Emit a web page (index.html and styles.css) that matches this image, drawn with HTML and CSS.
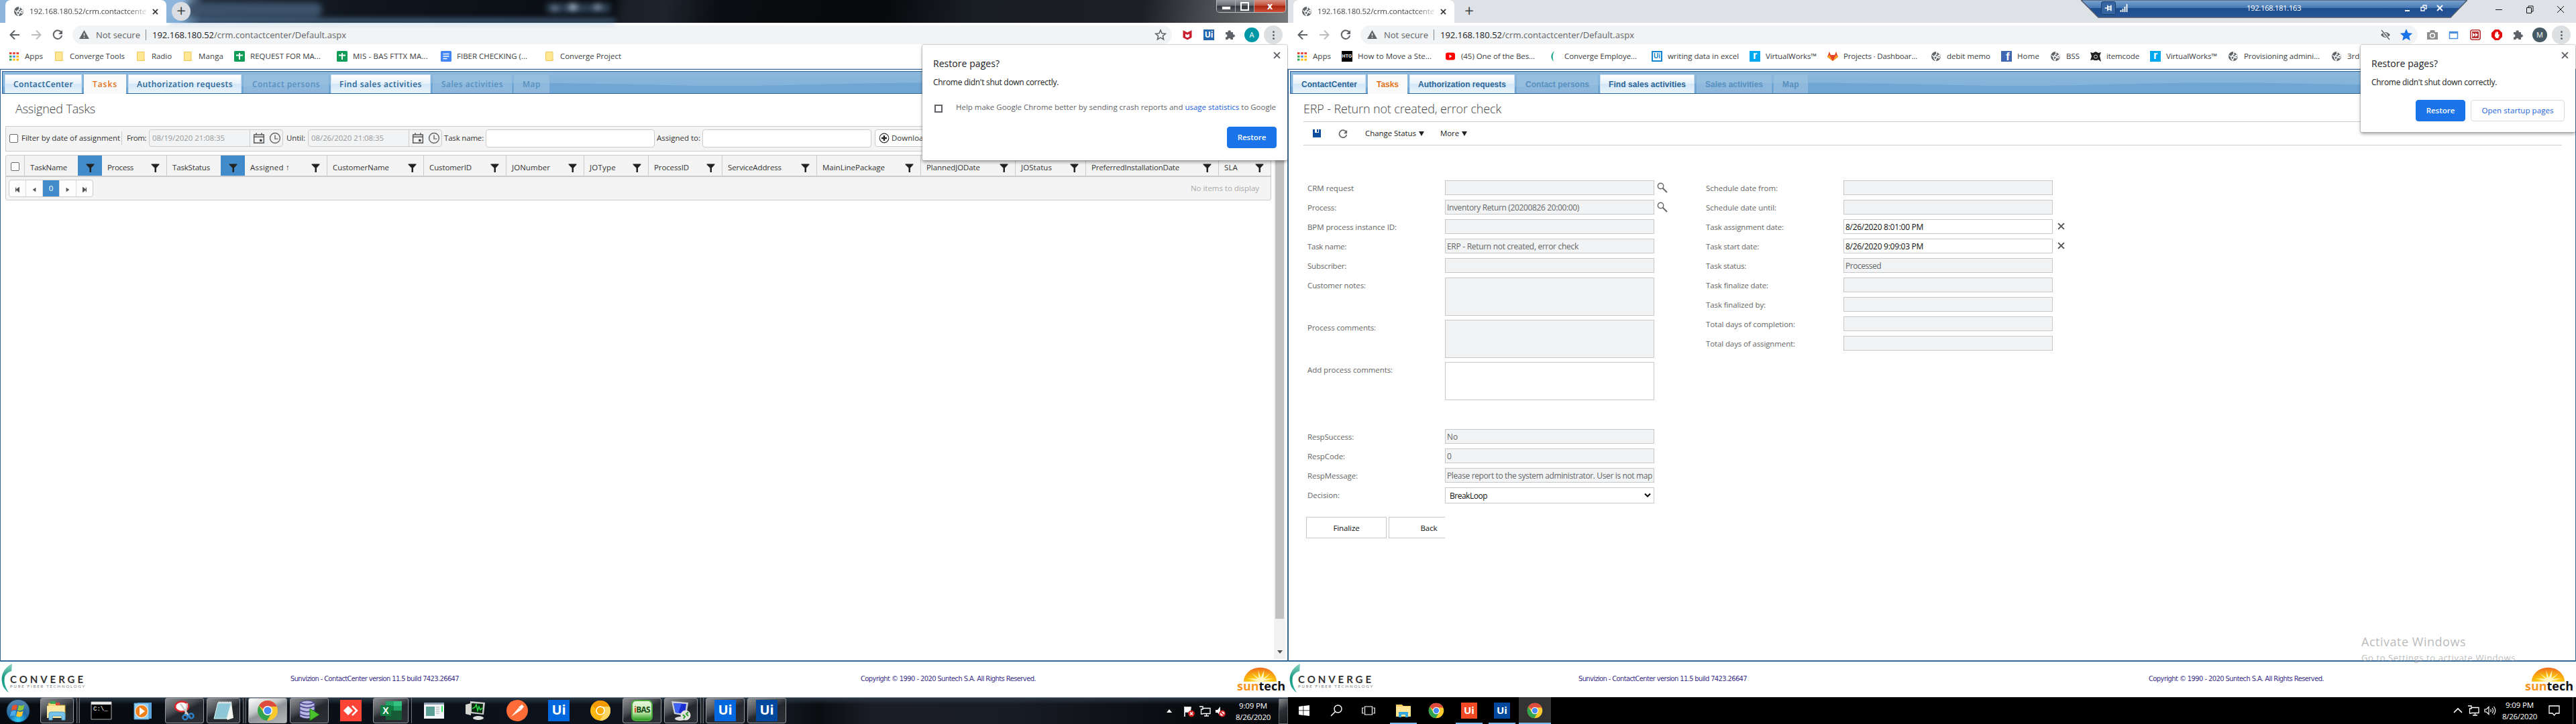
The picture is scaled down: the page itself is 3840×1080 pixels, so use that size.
FILE: index.html
```html
<!DOCTYPE html>
<html lang="en">
<head>
<meta charset="utf-8">
<title>ContactCenter</title>
<link rel="stylesheet" href="styles.css">
</head>
<body>
<svg class="defs" width="0" height="0">
  <linearGradient id="leaf" x1="0" y1="0" x2="0" y2="1"><stop offset="0" stop-color="#8ed6c4"/><stop offset=".5" stop-color="#17977f"/><stop offset="1" stop-color="#35b39c"/></linearGradient>
  <radialGradient id="sun" cx=".5" cy="1" r="1"><stop offset="0" stop-color="#fff3a0"/><stop offset=".35" stop-color="#fdc70c"/><stop offset="1" stop-color="#f06a1e"/></radialGradient>
  <symbol id="globe" viewBox="0 0 16 16"><circle cx="8" cy="8" r="7" fill="#5f6368"/><path d="M2.2 6.5 5 9l.3 2.4L7.4 14l1-2.600L9.800 9.500 8 8H5.500L7 6l2-.8L8.600 2H11c2.400 1.500 3 3.500 3 6l-2-1.500-1.500 1.500 1 2.500L14 10" fill="none" stroke="#fff" stroke-width="1.400"/></symbol>
  <symbol id="back" viewBox="0 0 16 16"><path d="M15 8H2M8 1.500 1.500 8 8 14.500" fill="none" stroke="currentColor" stroke-width="2"/></symbol>
  <symbol id="reload" viewBox="0 0 16 16"><path d="M13.500 4.500A6.300 6.300 0 1 0 14.200 9" fill="none" stroke="currentColor" stroke-width="2"/><path d="M15 1v6H9z" fill="currentColor"/></symbol>
  <symbol id="warn" viewBox="0 0 16 14"><path d="M8 0 16 14H0z" fill="#5f6368"/><path d="M8 5v4M8 10.500v1.700" stroke="#fff" stroke-width="1.600"/></symbol>
  <symbol id="close" viewBox="0 0 10 10"><path d="m1 1 8 8M9 1 1 9" stroke="currentColor" stroke-width="1.800"/></symbol>
  <symbol id="apps" viewBox="0 0 16 16"><path d="M1 2h3.500v3H1z M6.200 2h3.500v3H6.200z M11.500 2H15v3h-3.500z" fill="#ea4335"/><path d="M1 6.800h3.500v3H1z" fill="#34a853"/><path d="M6.200 6.800h3.500v3H6.200z" fill="#4285f4"/><path d="M11.500 6.800H15v3h-3.500z M6.200 11.500h3.500v3H6.200z M11.500 11.500H15v3h-3.500z" fill="#fbbc05"/><path d="M1 11.500h3.500v3H1z" fill="#34a853"/></symbol>
  <symbol id="folder" viewBox="0 0 16 16"><path d="M2.500 1.500h10.500v13H2.500z" fill="#ffe794" stroke="#efc75e"/><path d="M11 12h3v2.500h-3z" fill="#f7d775"/></symbol>
  <symbol id="sheet" viewBox="0 0 16 16"><rect width="16" height="16" rx="1.500" fill="#0f9d58"/><path d="M3 6.500h10M8 3v10" stroke="#fff" stroke-width="2"/></symbol>
  <symbol id="doc" viewBox="0 0 16 16"><rect width="16" height="16" rx="1.500" fill="#4285f4"/><path d="M3.500 4.500h9M3.500 8h9M3.500 11.500h6" stroke="#fff" stroke-width="1.600"/></symbol>
  <symbol id="star" viewBox="0 0 16 16"><path d="m8 1.800 1.900 4.300 4.600.4-3.500 3 1.100 4.600L8 11.700l-4.100 2.400L5 9.500l-3.500-3 4.600-.4z" fill="var(--f,none)" stroke="currentColor" stroke-width="1.400"/></symbol>
  <symbol id="puzzle" viewBox="0 0 16 16"><path d="M1 4h3.500a2.200 2.200 0 1 1 4.300 0H12v3.400a2.200 2.200 0 1 1 0 4.200V15H8.500a2 2 0 1 0-4 0H1v-3.700a2 2 0 1 0 0-3.900z" fill="#5f6368"/></symbol>
  <symbol id="funnel" viewBox="0 0 13 13"><path d="M.5.500h12v1L8 6.500V13H5.500V6.500L.5 1.500z" fill="#222"/></symbol>
  <symbol id="cal" viewBox="0 0 16 16"><path d="M1.500 3.500h13v11h-13zM1.500 6.500h13M4.500 1v3M11.500 1v3" fill="none" stroke="#555" stroke-width="1.300"/><path d="M9 9.500h3v3H9z" fill="#444"/></symbol>
  <symbol id="clock" viewBox="0 0 16 16"><circle cx="8" cy="8" r="6.600" fill="none" stroke="#666" stroke-width="1.300"/><path d="M8 4v5h4" fill="none" stroke="#666" stroke-width="1.300"/></symbol>
  <symbol id="mag" viewBox="0 0 16 16"><circle cx="5.500" cy="5.500" r="4.200" fill="none" stroke="#666" stroke-width="1.400"/><path d="m8.500 8.500 6.500 6.500" stroke="#666" stroke-width="2"/></symbol>
  <symbol id="chrome" viewBox="0 0 32 32"><circle cx="16" cy="16" r="15" fill="#fbc92e"/><path d="M3 8.500A15 15 0 0 1 29 8.500L29.500 10H16a6.500 6.500 0 0 0-6 4z" fill="#dd4b3e"/><path d="M3 8.500A15 15 0 0 0 15 31l6.500-11a6.600 6.600 0 0 1-11.500-1z" fill="#31a350"/><circle cx="16" cy="16" r="7" fill="#fff"/><circle cx="16" cy="16" r="5.500" fill="#4a8af4"/></symbol>
  <symbol id="converge" viewBox="0 0 18 48"><path d="M17 1C5 8-1 18 1 30c1 8 5 13 11 17C7 40 4 33 5 24c.6-5 5-9 11-11z" fill="url(#leaf)"/></symbol>
  <symbol id="suntech" viewBox="0 0 52 22"><path d="M1 22a25 21.500 0 0 1 50 0z" fill="url(#sun)"/><path d="m26 22-19-5 15 1-9-9 11 8-1-12 4 11 5-11-1 12 11-8-9 9 14-1z" fill="#fff6c4"/></symbol>
  <symbol id="net" viewBox="0 0 18 16"><path d="M6 3.500h11v8H6M11.500 11.500V15M8 15h7M1 1h5v4H3.500v7H6" fill="none" stroke="#fff" stroke-width="1.300"/></symbol>
</svg>

<div class="desktop">

<!-- First monitor -->
<section class="screen win7">
  <header class="strip">
    <div class="ghosts"><i class="g1"></i><i class="g2"></i><i class="g3"></i><i class="g4"></i></div>
    <div class="btab"><svg class="i16"><use href="#globe"/></svg><span class="fit fade" data-w="174">192.168.180.52/crm.contactcente</span><svg class="i9"><use href="#close"/></svg></div>
    <div class="plus">+</div>
    <div class="caption7"><b class="min"></b><b class="max"></b><b class="cls">x</b></div>
  </header>
  <div class="toolbar">
    <svg class="nav"><use href="#back"/></svg><svg class="nav fwd"><use href="#back"/></svg><svg class="nav"><use href="#reload"/></svg>
    <div class="omni"><svg class="warn"><use href="#warn"/></svg><span class="fit ns" data-w="66">Not secure</span><i class="bar"></i><span class="fit host" data-w="92">192.168.180.52</span><span class="fit path" data-w="197">/crm.contactcenter/Default.aspx</span><svg class="i18 end"><use href="#star"/></svg></div>
    <div class="exts">
      <svg class="i16" viewBox="0 0 16 16"><path d="m1.500 1 6.500 3.500L14.500 1v11L8 15.500 1.500 12z" fill="#c8202f"/><path d="M5 6.500 8 8l3-1.500v4.300L8 12.300l-3-1.500z" fill="#fff"/></svg>
      <span class="uibox">Ui</span>
      <svg class="i16"><use href="#puzzle"/></svg>
      <span class="avatar teal">A</span>
      <span class="dots"><i></i><i></i><i></i></span>
    </div>
  </div>
  <nav class="bookmarks">
    <a><svg><use href="#apps"/></svg><span class="fit" data-w="27">Apps</span></a>
    <a><svg><use href="#folder"/></svg><span class="fit" data-w="82">Converge Tools</span></a>
    <a><svg><use href="#folder"/></svg><span class="fit" data-w="30">Radio</span></a>
    <a><svg><use href="#folder"/></svg><span class="fit" data-w="37">Manga</span></a>
    <a><svg><use href="#sheet"/></svg><span class="fit" data-w="105" data-b="113">REQUEST FOR MA...</span></a>
    <a><svg><use href="#sheet"/></svg><span class="fit" data-w="112" data-b="115">MIS - BAS FTTX MA...</span></a>
    <a><svg><use href="#doc"/></svg><span class="fit" data-w="105" data-b="114">FIBER CHECKING (...</span></a>
    <a><svg><use href="#folder"/></svg><span class="fit" data-w="91">Converge Project</span></a>
  </nav>
  <main class="frame">
    <div class="tabs">
      <svg class="wave" viewBox="0 0 1920 32" preserveAspectRatio="none"><path d="M0 22C300 28 500 15 830 17c160 2 200 5 290 4 130-2 200-6 350-4 150 2 300 8 450 0V32H0z"/></svg>
      <a><span class="fit" data-w="89">ContactCenter</span></a><a class="on"><span class="fit" data-w="37">Tasks</span></a><a><span class="fit" data-w="143">Authorization requests</span></a><a class="off"><span class="fit" data-w="101">Contact persons</span></a><a><span class="fit" data-w="123">Find sales activities</span></a><a class="off"><span class="fit" data-w="92">Sales activities</span></a><a class="off"><span class="fit" data-w="27">Map</span></a>
    </div>
    <div class="content">
      <div class="listing">
        <h1><span class="fit" data-w="119">Assigned Tasks</span></h1>
        <div class="filters">
          <i class="cb"></i><span class="fit flabel" data-w="147">Filter by date of assignment</span><i class="vr"></i>
          <span class="fit" data-w="29">From:</span>
          <div class="dt"><span class="fit" data-w="109" data-b="146">08/19/2020 21:08:35</span><svg class="i18"><use href="#cal"/></svg><svg class="i18"><use href="#clock"/></svg></div>
          <span class="fit" data-w="28">Until:</span>
          <div class="dt"><span class="fit" data-w="109" data-b="146">08/26/2020 21:08:35</span><svg class="i18"><use href="#cal"/></svg><svg class="i18"><use href="#clock"/></svg></div>
          <span class="fit tn" data-w="59">Task name:</span><div class="txt"></div>
          <span class="fit tn" data-w="65">Assigned to:</span><div class="txt"></div>
          <div class="dl"><svg class="i16" viewBox="0 0 16 16"><circle cx="8" cy="8" r="6.800" fill="none" stroke="#333" stroke-width="1.200"/><path d="M4 8h8M8 4v8" stroke="#222" stroke-width="2.400"/></svg><span>Download</span></div>
        </div>
        <div class="gridbox">
          <div class="ghead">
            <div class="ck"><i class="cb"></i></div>
            <div><span class="fit" data-w="55">TaskName</span><b class="sel"><svg><use href="#funnel"/></svg></b></div>
            <div><span class="fit" data-w="39">Process</span><b><svg><use href="#funnel"/></svg></b></div>
            <div><span class="fit" data-w="56">TaskStatus</span><b class="sel"><svg><use href="#funnel"/></svg></b></div>
            <div><span class="fit" data-w="59">Assigned ↑</span><b><svg><use href="#funnel"/></svg></b></div>
            <div><span class="fit" data-w="84">CustomerName</span><b><svg><use href="#funnel"/></svg></b></div>
            <div><span class="fit" data-w="63">CustomerID</span><b><svg><use href="#funnel"/></svg></b></div>
            <div><span class="fit" data-w="57">JONumber</span><b><svg><use href="#funnel"/></svg></b></div>
            <div><span class="fit" data-w="39">JOType</span><b><svg><use href="#funnel"/></svg></b></div>
            <div><span class="fit" data-w="52">ProcessID</span><b><svg><use href="#funnel"/></svg></b></div>
            <div><span class="fit" data-w="80">ServiceAddress</span><b><svg><use href="#funnel"/></svg></b></div>
            <div><span class="fit" data-w="93">MainLinePackage</span><b><svg><use href="#funnel"/></svg></b></div>
            <div><span class="fit" data-w="80">PlannedJODate</span><b><svg><use href="#funnel"/></svg></b></div>
            <div><span class="fit" data-w="46">JOStatus</span><b><svg><use href="#funnel"/></svg></b></div>
            <div><span class="fit" data-w="131">PreferredInstallationDate</span><b><svg><use href="#funnel"/></svg></b></div>
            <div><span class="fit" data-w="20">SLA</span><b><svg><use href="#funnel"/></svg></b></div>
          </div>
          <div class="pager">
            <div class="pages">
              <i><svg viewBox="0 0 10 10"><path d="M2 1v8M8 1v8L3 5z" fill="#555" stroke="#555" stroke-width="1.500"/></svg></i><i><svg viewBox="0 0 10 10"><path d="M8 1v8L2 5z" fill="#555"/></svg></i><i class="cur">0</i><i><svg viewBox="0 0 10 10"><path d="M2 1v8l6-4z" fill="#555"/></svg></i><i><svg viewBox="0 0 10 10"><path d="M8 1v8M2 1v8l5-4z" fill="#555" stroke="#555" stroke-width="1.500"/></svg></i>
            </div>
            <span class="fit" data-w="102">No items to display</span>
          </div>
        </div>
      </div>
      <div class="scroll"><i class="thumb"></i><i class="down"></i></div>
    </div>
  </main>
  <footer class="foot">
    <div class="conv"><svg class="cleaf"><use href="#converge"/></svg><div><b class="fit" data-w="113">CONVERGE</b><small class="fit" data-w="113">PURE FIBER TECHNOLOGY</small></div></div>
    <p class="ver"><span class="fit" data-w="251">Sunvizion - ContactCenter version 11.5 build 7423.26647</span></p>
    <p class="copy"><span class="fit" data-w="261">Copyright © 1990 - 2020 Suntech S.A. All Rights Reserved.</span></p>
    <div class="sunt"><svg><use href="#suntech"/></svg><b class="fit" data-w="72"><em>sun</em>tech</b></div>
  </footer>
  <div class="task7">
    <svg class="orb" viewBox="0 0 40 40"><defs><radialGradient id="ob" cx=".5" cy=".9" r=".9"><stop offset="0" stop-color="#2fd0f5"/><stop offset=".45" stop-color="#1d6aa8"/><stop offset="1" stop-color="#5c86a8"/></radialGradient></defs><circle cx="20" cy="20" r="18" fill="url(#ob)" stroke="#12324d"/><path d="M11 12q4-3 8-1l-2 8q-4-2-8 1z" fill="#e5532d"/><path d="M21 11q5 2 9-1l-2 8q-5 3-9 1z" fill="#8cc63f"/><path d="M9 21q4-3 8-1l-2 8q-4-2-8 1z" fill="#4fa9e8"/><path d="M19 20q4 3 9 0l-2 8q-5 3-9 0z" fill="#fbc52d"/></svg>
    <div class="slot on stack"><svg viewBox="0 0 32 32"><path d="M3 5h10l2 3h13v17H3z" fill="#f4d879" stroke="#c9a544"/><path d="M6 2h8v4H6z" fill="#3aa655"/><path d="M14 4h6v4h-6z" fill="#d9483b"/><path d="M1 9h26v18H1z" fill="#fbe9a2"/><path d="M4 30V21q0-3 3-3h17q4 0 4 3v9h-5v-6H9v6z" fill="#79c3ea" stroke="#4d9cc9"/></svg></div>
    <div class="slot"><svg viewBox="0 0 32 32"><path d="M1 3h30v26H1z" fill="#000" stroke="#aaa"/><path d="M1 3h30v4H1z" fill="#e6e6e6"/><text x="4" y="16" class="cmd">C:\_</text></svg></div>
    <div class="slot"><svg viewBox="0 0 32 32"><path d="M8 4h21v24H8z" fill="#5aa5dc"/><path d="M3 5h22v24H3z" fill="#8fcdf2" stroke="#4c93c4"/><circle cx="14" cy="17" r="9.500" fill="#f0821e" stroke="#fff"/><path d="M11 11v12l8-6z" fill="#fff"/></svg></div>
    <div class="slot on"><svg viewBox="0 0 32 32"><ellipse cx="12" cy="10" rx="10" ry="7.500" fill="#fff" stroke="#d8262c" stroke-width="2.500"/><path d="m10 6 14 20M20 5l-3 19" stroke="#ccc" stroke-width="2.500"/><circle cx="17" cy="26" r="3.500" fill="none" stroke="#2b80c9" stroke-width="2.500"/><circle cx="26" cy="24" r="3.500" fill="none" stroke="#2b80c9" stroke-width="2.500"/></svg></div>
    <div class="slot on stack"><svg viewBox="0 0 32 32"><path d="M8 4h20l-7 24H2z" fill="#8fc7d6" stroke="#dff"/><path d="m28 4 3 23-9 3-1-2z" fill="#f4f4ee"/><path d="M9 4h19" stroke="#eee" stroke-width="3" stroke-dasharray="1.500 1"/></svg></div>
    <div class="slot on lit"><svg><use href="#chrome"/></svg></div>
    <div class="slot on"><svg viewBox="0 0 32 32"><path d="M2 4q11-6 22 0v21q-11 6-22 0z" fill="#b8b8e2" stroke="#44448a"/><path d="M2 9q11 6 22 0M2 15q11 6 22 0M2 21q11 6 22 0M2 4q11 5 22 0" fill="none" stroke="#44448a" stroke-width="1.500"/><path d="M17 13v18l14-9z" fill="#4cc22e" stroke="#1f7a12"/></svg></div>
    <div class="slot"><svg viewBox="0 0 32 32"><path d="M0 0h32v32H0z" fill="#fb4336"/><path d="m12 9 7 7-7 7-7-7z" fill="#fff"/><path d="m18 9 7 7-7 7" fill="none" stroke="#fff" stroke-width="2.500"/></svg></div>
    <div class="slot on stack one"><svg viewBox="0 0 32 32"><path d="M8 2h12v7H8z" fill="#21a366"/><path d="M20 2h12v7H20z" fill="#33c481"/><path d="M8 9h12v14H8z" fill="#107c41"/><path d="M20 9h12v7H20z" fill="#21a366"/><path d="M8 16h24v14H8z" fill="#185c37"/><path d="M0 8h16v16H0z" fill="#107c41"/><text x="8" y="21" class="xl">X</text></svg></div>
    <div class="slot"><svg viewBox="0 0 32 32"><path d="M1 4h30v24H1z" fill="#f2f4f7"/><path d="M1 4h30v3H1z" fill="#8d9db0"/><path d="M4 10h13v14H4z" fill="#5b9e96"/><path d="M19 11h5M19 14h5M19 17h5M19 20h5" stroke="#aaa"/><path d="M27 9h2v9h-2z" fill="#3e6"/></svg></div>
    <div class="slot"><svg viewBox="0 0 32 32"><path d="M1 7 9 5v18l-8-2z" fill="#d6d6d0"/><path d="m8 2 22 2-2 18-20-2z" fill="#ccc"/><path d="m10 5 17 1-1 14-16-2z" fill="#06280b"/><path d="m11 13 4-2 2-4 2 9 2-6 2 5 3-3" fill="none" stroke="#2ee04a" stroke-width="1.500"/><ellipse cx="20" cy="27" rx="8" ry="3" fill="#ddd"/></svg></div>
    <div class="slot"><svg viewBox="0 0 32 32"><circle cx="16" cy="16" r="16" fill="#ff6c37"/><path d="m7 25 11-13 4 3zM18 11l5-4 3 3-4 5" fill="#fff"/></svg></div>
    <div class="slot"><span class="ui b1">Ui</span></div>
    <div class="slot"><svg viewBox="0 0 32 32"><circle cx="16" cy="16" r="15" fill="#fbb80f"/><path d="M3 8.500A15 15 0 0 1 29 8.500V10H16a6 6 0 0 0-6 4z" fill="#f29900"/><path d="m22 19-7 12a15 15 0 0 0 16-15q0-3-1-6H18z" fill="#fdd663"/><circle cx="16" cy="16" r="6" fill="#f9ab00" stroke="#fff" stroke-width="1.600"/></svg></div>
    <div class="slot on"><span class="ibas"><em>i</em>BAS</span></div>
    <div class="slot on stack"><svg viewBox="0 0 32 32"><path d="m2 2 25 2-3 20-18-3z" fill="#c9ced6"/><path d="m5 5 19 1-2 15-14-2z" fill="#1a2ed0"/><path d="m5 5 12 .6L12 20l-4-1z" fill="#3e62f4"/><ellipse cx="15" cy="28" rx="8" ry="3" fill="#ddd"/><circle cx="23" cy="23" r="7.500" fill="#e3e3de"/><path d="m19 22 3 3-2 3M27 18l-3 3 3 3" fill="none" stroke="#2ba02b" stroke-width="2"/></svg></div>
    <div class="slot on"><span class="ui b1">Ui</span></div>
    <div class="slot on"><span class="ui b2">Ui</span></div>
    <div class="tray">
      <svg class="up" viewBox="0 0 8 5"><path d="M0 5h8L4 0z" fill="#fff"/></svg>
      <svg class="i18" viewBox="0 0 18 18"><path d="M2 2v15M3 3h8l-1 7H3z" stroke="#fff" stroke-width="1.600" fill="#fff"/><circle cx="12" cy="12.500" r="4.800" fill="#d32020"/><path d="m10 10.500 4 4m0-4-4 4" stroke="#fff" stroke-width="1.400"/></svg>
      <svg class="i18"><use href="#net"/></svg>
      <svg class="i18" viewBox="0 0 18 18"><path d="M2 7h3l4-5v14l-4-5H2z" fill="#fff"/><circle cx="12" cy="12.500" r="4" fill="#fff" stroke="#d32020" stroke-width="1.800"/><path d="m9.500 10 5 5" stroke="#d32020" stroke-width="1.800"/></svg>
      <div class="time"><span class="fit" data-w="42">9:09 PM</span><span class="fit" data-w="52">8/26/2020</span></div>
      <i class="peek"></i>
    </div>
  </div>
  <aside class="bubble big">
    <svg class="x"><use href="#close"/></svg>
    <h2><span class="fit" data-w="99">Restore pages?</span></h2>
    <p><span class="fit" data-w="187">Chrome didn't shut down correctly.</span></p>
    <div class="opt"><i></i><span class="fit" data-w="477">Help make Google Chrome better by sending crash reports and <a>usage statistics</a> to Google</span></div>
    <div class="acts"><button class="pri">Restore</button></div>
  </aside>
</section>

<!-- Second monitor -->
<section class="screen win10">
  <header class="strip">
    <div class="btab"><svg class="i16"><use href="#globe"/></svg><span class="fit fade" data-w="174">192.168.180.52/crm.contactcente</span><svg class="i9"><use href="#close"/></svg></div>
    <div class="plus">+</div>
    <div class="caption10">
      <svg viewBox="0 0 12 12"><path d="M1 6.500h10" stroke="#111"/></svg>
      <svg viewBox="0 0 12 12"><path d="M1.500 3.500h7v8h-7zM4 3V1h7v8H9" fill="none" stroke="#111"/></svg>
      <svg viewBox="0 0 12 12"><path d="m1 1 10 10M11 1 1 11" stroke="#111"/></svg>
    </div>
  </header>
  <div class="toolbar">
    <svg class="nav"><use href="#back"/></svg><svg class="nav fwd"><use href="#back"/></svg><svg class="nav"><use href="#reload"/></svg>
    <div class="omni"><svg class="warn"><use href="#warn"/></svg><span class="fit ns" data-w="66">Not secure</span><i class="bar"></i><span class="fit host" data-w="92">192.168.180.52</span><span class="fit path" data-w="197">/crm.contactcenter/Default.aspx</span><svg class="i16 end" viewBox="0 0 16 16"><path d="M1 8q7-8 14 0-7 8-14 0z" fill="#5f6368"/><circle cx="8" cy="8" r="2.500" fill="none" stroke="#fff"/><path d="m2 1 12 14" stroke="#fff" stroke-width="3"/><path d="m2 1 12 14" stroke="#5f6368" stroke-width="1.600"/></svg><svg class="i18 blue"><use href="#star"/></svg></div>
    <div class="exts">
      <svg class="i16" viewBox="0 0 16 16"><path d="M0 4h4l1-3h6l1 3h4v11H0z" fill="#8f8f8f"/><circle cx="8" cy="9" r="3.300" fill="none" stroke="#fff" stroke-width="1.500"/></svg>
      <svg class="i16" viewBox="0 0 16 16"><path d="M1.500 3.500h12v10h-12z" fill="#fff" stroke="#4a8fe0" stroke-width="1.500"/><path d="M1 3h13v3H1z" fill="#4a8fe0"/></svg>
      <svg class="i16" viewBox="0 0 16 16"><rect x=".8" y=".8" width="14.400" height="14.400" rx="3" fill="#fff" stroke="#b93434" stroke-width="1.600"/><path d="M3 3h10v10H3z" fill="#b93434"/><path d="M4 5v6l4-3v3l4-3-4-3v3z" fill="#fff"/></svg>
      <svg class="i16" viewBox="0 0 16 16"><path d="M5 0h6l5 5v6l-5 5H5l-5-5V5z" fill="#e40d0d"/><path d="M5 5v5l2 3h3l2-5-1-1-1 1V4H9v3-4H7.500v4L7 4H6v4z" fill="#fff"/></svg>
      <svg class="i16"><use href="#puzzle"/></svg>
      <span class="avatar slate">M</span>
      <span class="dots"><i></i><i></i><i></i></span>
    </div>
  </div>
  <nav class="bookmarks">
    <a><svg><use href="#apps"/></svg><span class="fit" data-w="27">Apps</span></a>
    <a><span class="htg">HTG</span><span class="fit" data-w="110" data-b="114">How to Move a Ste...</span></a>
    <a><svg viewBox="0 0 16 16"><rect x="1" y="2.500" width="14" height="11" rx="3" fill="#f00"/><path d="M6.500 5.500v5l4-2.500z" fill="#fff"/></svg><span class="fit" data-w="110" data-b="114">(45) One of the Bes...</span></a>
    <a><svg viewBox="0 0 16 16"><path d="M9 0Q0 8 8 16 5 8 9 0z" fill="#2ea894"/></svg><span class="fit" data-w="108" data-b="114">Converge Employe...</span></a>
    <a><span class="uis">Ui</span><span class="fit" data-w="106">writing data in excel</span></a>
    <a><span class="vw">r</span><span class="fit" data-w="76">VirtualWorks™</span></a>
    <a><svg viewBox="0 0 16 16"><path d="M0 9 3 1l2 5h6l2-5 3 8-8 6z" fill="#e24329"/><path d="m0 9 8 6-5-9zM16 9l-8 6 5-9z" fill="#fca326"/></svg><span class="fit" data-w="110" data-b="114">Projects · Dashboar...</span></a>
    <a><svg><use href="#globe"/></svg><span class="fit" data-w="65">debit memo</span></a>
    <a><span class="fb">f</span><span class="fit" data-w="33">Home</span></a>
    <a><svg><use href="#globe"/></svg><span class="fit" data-w="20">BSS</span></a>
    <a><svg viewBox="0 0 16 16"><path d="m0 2 4 1 4-2 4 2 4-1-2 5 2 9-4-3-2 1H6l-2-1-4 1 2-6z" fill="#222"/><circle cx="8" cy="8.500" r="2.500" fill="none" stroke="#ddd"/></svg><span class="fit" data-w="49">itemcode</span></a>
    <a><span class="vw">r</span><span class="fit" data-w="76">VirtualWorks™</span></a>
    <a><svg><use href="#globe"/></svg><span class="fit" data-w="113" data-b="114">Provisioning admini...</span></a>
    <a><svg><use href="#globe"/></svg><span>3rd Party</span></a>
  </nav>
  <main class="frame">
    <div class="tabs arial">
      <svg class="wave" viewBox="0 0 1920 32" preserveAspectRatio="none"><path d="M0 22C300 28 500 15 830 17c160 2 200 5 290 4 130-2 200-6 350-4 150 2 300 8 450 0V32H0z"/></svg>
      <a><span class="fit" data-w="83">ContactCenter</span></a><a class="on"><span class="fit" data-w="33">Tasks</span></a><a><span class="fit" data-w="131">Authorization requests</span></a><a class="off"><span class="fit" data-w="95">Contact persons</span></a><a><span class="fit" data-w="115">Find sales activities</span></a><a class="off"><span class="fit" data-w="86">Sales activities</span></a><a class="off"><span class="fit" data-w="25">Map</span></a>
    </div>
    <div class="content detail">
      <h1><span class="fit" data-w="295">ERP - Return not created, error check</span></h1>
      <div class="cmds">
        <svg class="save" viewBox="0 0 12 12"><path d="M0 0h12v12H0z" fill="#0b4f9e"/><path d="M3 0h6v5H3z" fill="#fff"/><path d="M6 0h2v4H6z" fill="#0b4f9e"/></svg>
        <svg class="i14"><use href="#reload"/></svg>
        <span class="fit cs" data-w="76">Change Status</span><i class="tri"></i><span class="fit mo" data-w="28">More</span><i class="tri"></i>
      </div>
      <div class="form">
        <div class="col">
          <div class="row"><label><span class="fit" data-w="69">CRM request</span></label><div class="f"></div><svg class="i16"><use href="#mag"/></svg></div>
          <div class="row"><label><span class="fit" data-w="43">Process:</span></label><div class="f"><span class="fit" data-w="197">Inventory Return (20200826 20:00:00)</span></div><svg class="i16"><use href="#mag"/></svg></div>
          <div class="row"><label><span class="fit" data-w="133">BPM process instance ID:</span></label><div class="f"></div></div>
          <div class="row"><label><span class="fit" data-w="58">Task name:</span></label><div class="f"><span class="fit" data-w="196">ERP - Return not created, error check</span></div></div>
          <div class="row"><label><span class="fit" data-w="58">Subscriber:</span></label><div class="f"></div></div>
          <div class="row area"><label><span class="fit" data-w="87">Customer notes:</span></label><div class="f"></div></div>
          <div class="row area"><label><span class="fit" data-w="102">Process comments:</span></label><div class="f"></div></div>
          <div class="row area last"><label><span class="fit" data-w="127">Add process comments:</span></label><div class="f w"></div></div>
          <div class="row"><label><span class="fit" data-w="69">RespSuccess:</span></label><div class="f"><span class="fit" data-w="16">No</span></div></div>
          <div class="row"><label><span class="fit" data-w="56">RespCode:</span></label><div class="f"><span>0</span></div></div>
          <div class="row"><label><span class="fit" data-w="75">RespMessage:</span></label><div class="f"><span class="fit" data-w="306">Please report to the system administrator. User is not map</span></div></div>
          <div class="row pick"><label><span class="fit" data-w="48">Decision:</span></label><div class="f w"><span class="fit" data-w="56">BreakLoop</span><svg viewBox="0 0 10 8"><path d="m1 1.500 4 4 4-4" fill="none" stroke="#111" stroke-width="2.200"/></svg></div></div>
          <div class="btns"><div class="btn"><span class="fit" data-w="39">Finalize</span></div><div class="btn cut"><span class="fit" data-w="25">Back</span></div></div>
        </div>
        <div class="col two">
          <div class="row"><label><span class="fit" data-w="107">Schedule date from:</span></label><div class="f"></div></div>
          <div class="row"><label><span class="fit" data-w="105">Schedule date until:</span></label><div class="f"></div></div>
          <div class="row"><label><span class="fit" data-w="116">Task assignment date:</span></label><div class="f w"><span class="fit" data-w="116">8/26/2020 8:01:00 PM</span></div><svg class="clr"><use href="#close"/></svg></div>
          <div class="row"><label><span class="fit" data-w="79">Task start date:</span></label><div class="f w"><span class="fit" data-w="116">8/26/2020 9:09:03 PM</span></div><svg class="clr"><use href="#close"/></svg></div>
          <div class="row"><label><span class="fit" data-w="60">Task status:</span></label><div class="f"><span class="fit" data-w="53">Processed</span></div></div>
          <div class="row"><label><span class="fit" data-w="93">Task finalize date:</span></label><div class="f"></div></div>
          <div class="row"><label><span class="fit" data-w="89">Task finalized by:</span></label><div class="f"></div></div>
          <div class="row"><label><span class="fit" data-w="133">Total days of completion:</span></label><div class="f"></div></div>
          <div class="row"><label><span class="fit" data-w="133">Total days of assignment:</span></label><div class="f"></div></div>
        </div>
      </div>
    </div>
  </main>
  <footer class="foot">
    <div class="conv"><svg class="cleaf"><use href="#converge"/></svg><div><b class="fit" data-w="113">CONVERGE</b><small class="fit" data-w="113">PURE FIBER TECHNOLOGY</small></div></div>
    <p class="ver"><span class="fit" data-w="251">Sunvizion - ContactCenter version 11.5 build 7423.26647</span></p>
    <p class="copy"><span class="fit" data-w="261">Copyright © 1990 - 2020 Suntech S.A. All Rights Reserved.</span></p>
    <div class="sunt"><svg><use href="#suntech"/></svg><b class="fit" data-w="72"><em>sun</em>tech</b></div>
  </footer>
  <div class="task10">
    <div class="slot"><svg class="i16" viewBox="0 0 16 16"><path d="m0 2 6.500-.9v6.400H0zM7.300 1 16 0v7.500H7.300zM0 8.300h6.500v6.600L0 14zM7.300 8.300H16V16l-8.700-1.100z" fill="#fff"/></svg></div>
    <div class="slot"><svg class="i18" viewBox="0 0 18 18"><circle cx="11.500" cy="6.500" r="5.500" fill="none" stroke="#fff" stroke-width="1.400"/><path d="M7.500 10.500 1 17" stroke="#fff" stroke-width="1.500"/></svg></div>
    <div class="slot"><svg class="i20" viewBox="0 0 20 16"><path d="M4.500 2h11v12h-11zM3 4H.8v8H3M17 4h2.200v8H17" fill="none" stroke="#fff" stroke-width="1.200"/></svg></div>
    <div class="slot run gap"><svg viewBox="0 0 24 24"><path d="M1 3h9l2 2h11v16H1z" fill="#f7cf60"/><path d="M1 6h22v15H1z" fill="#ffe594"/><path d="M5 22v-8h14v8h-4v-4H9v4z" fill="#35a6e0"/></svg></div>
    <div class="slot"><svg><use href="#chrome"/></svg></div>
    <div class="slot run"><span class="ui sm red">Ui</span></div>
    <div class="slot run"><span class="ui sm b2">Ui</span></div>
    <div class="slot run act"><svg><use href="#chrome"/></svg></div>
    <div class="tray">
      <svg class="i14" viewBox="0 0 14 14"><path d="m1 10 6-6 6 6" fill="none" stroke="#fff" stroke-width="1.600"/></svg>
      <svg class="i18"><use href="#net"/></svg>
      <svg class="i18" viewBox="0 0 18 16"><path d="M1 6h2.500L7 2.500v11L3.500 10H1zM9.500 6q1.500 2 0 4M12 4q3 4 0 8M14.500 2q4.500 6 0 12" fill="none" stroke="#fff" stroke-width="1.200"/></svg>
      <div class="time"><span class="fit" data-w="42">9:09 PM</span><span class="fit" data-w="52">8/26/2020</span></div>
      <svg class="note" viewBox="0 0 17 16"><path d="M1 1h15v11h-5l-2.500 3L6 12H1z" fill="none" stroke="#fff" stroke-width="1.300"/></svg>
      <i class="peek"></i>
    </div>
  </div>
  <div class="rdp">
    <svg class="shape" viewBox="0 0 576 27" preserveAspectRatio="none"><defs><linearGradient id="rb" x1="0" y1="0" x2="0" y2="1"><stop offset="0" stop-color="#7ea5d2"/><stop offset=".45" stop-color="#4779b5"/><stop offset=".46" stop-color="#1f4f8f"/><stop offset="1" stop-color="#255596"/></linearGradient></defs><path d="M0 0h576l-25 26H26z" fill="url(#rb)" stroke="#4b5a6c" stroke-width="1.500"/></svg>
    <span class="pin"><svg viewBox="0 0 14 12"><path d="M0 6h5M5 1v10M5 4h6v4H5M11 1v10" stroke="#fff" stroke-width="2" fill="none"/></svg></span>
    <svg class="sig" viewBox="0 0 12 12"><path d="M1.500 12V9M4.500 12V7M7.500 12V4M10.500 12V0" stroke="#fff" stroke-width="1.800"/></svg>
    <span class="fit addr" data-w="81">192.168.181.163</span>
    <svg class="c" viewBox="0 0 10 10"><path d="M1 9h7" stroke="#fff" stroke-width="2"/></svg>
    <svg class="c" viewBox="0 0 10 10"><path d="M1 4h5v5H1zM4 3V1h5v5H7" stroke="#fff" fill="none" stroke-width="1.300"/></svg>
    <svg class="c"><use href="#close"/></svg>
  </div>
  <aside class="bubble small">
    <svg class="x"><use href="#close"/></svg>
    <h2><span class="fit" data-w="99">Restore pages?</span></h2>
    <p><span class="fit" data-w="187">Chrome didn't shut down correctly.</span></p>
    <div class="acts"><button class="pri">Restore</button><button class="sec"><span class="fit" data-w="107">Open startup pages</span></button></div>
  </aside>
  <div class="activate"><span class="fit a1" data-w="156">Activate Windows</span><span class="fit a2" data-w="234">Go to Settings to activate Windows.</span></div>
</section>
</div>
<script src="fit.js"></script>
</body>
</html>
```
FILE: fit.js
```js
document.querySelectorAll('.fit').forEach(function (el) {
  var want = parseFloat(el.dataset.w);
  el.style.display = 'inline-block';
  el.style.width = 'max-content';
  var natural = el.getBoundingClientRect().width;
  var n = el.textContent.length;
  var base = parseFloat(getComputedStyle(el).letterSpacing) || 0;
  el.style.letterSpacing = (base + (want - natural) / n) + 'px';
  el.style.width = (el.dataset.b || want) + 'px';
});
```
FILE: styles.css
```css
* { box-sizing: border-box; }
body { margin: 0; font: 11.5px/16px "Open Sans", "Noto Sans", sans-serif; color: #333; background: #fff; overflow: hidden; }
h1, h2, p { margin: 0; font-weight: 400; }
i, em { font-style: normal; }
svg { display: block; flex: none; }
.defs { position: absolute; }
.fit { white-space: pre; flex: none; }
.desktop { display: grid; grid-template-columns: 1920px 1920px; width: 3840px; height: 1080px; overflow: hidden; }
.screen { position: relative; display: flex; flex-direction: column; height: 1080px; width: 1920px; overflow: hidden; background: #fff; }
.i9 { width: 9px; height: 9px; color: #333; }
.i14 { width: 14px; height: 14px; }
.i16 { width: 16px; height: 16px; }
.i18 { width: 18px; height: 18px; }
.i20 { width: 20px; height: 16px; }

/* Browser tab strip */
.strip { position: relative; height: 34px; display: flex; flex: none; background: #dee1e6; }
.win7 .strip { background: linear-gradient(100deg, #8eb6dc 0, #8eb6dc 268px, #1f2b38 300px, #10161e 520px, #090d12 900px, #1b2028 920px, #1e232c 980px, #0a0d11 1060px, #07090c 1300px, #181c23 1420px, #1c1f25 1680px, #4b4e52 1780px, #7e8180 1920px); }
.ghosts { position: absolute; inset: 0; overflow: hidden; filter: blur(4px); }
.ghosts i { position: absolute; }
.ghosts .g1 { left: 280px; top: 4px; width: 200px; height: 21px; background: #3d536b; border-radius: 10px; }
.ghosts .g2 { left: 252px; top: 29px; width: 665px; height: 4px; background: #6d9ccc; }
.ghosts .g3 { left: 815px; top: 5px; width: 95px; height: 14px; background: #2e3f52; }
.ghosts .g4 { left: 848px; top: 6px; width: 12px; height: 9px; background: #a9bdd4; box-shadow: -27px 2px 0 -2px #9fb3c9, 37px 0 0 -1px #9fb3c9; }
.btab { position: relative; margin-left: 8px; width: 240px; height: 34px; background: #fff; border-radius: 8px 8px 0 0; display: flex; align-items: center; padding: 0 0 0 12px; color: #45494d; }
.btab .fade { margin: 0 9px 0 8px; -webkit-mask: linear-gradient(90deg, #000 85%, #0003); mask: linear-gradient(90deg, #000 85%, #0003); overflow: hidden; }
.plus { position: relative; margin: 3px 0 0 8px; width: 28px; height: 28px; border-radius: 50%; font: 24px/26px "Open Sans", sans-serif; text-align: center; color: #3c4043; }
.win7 .plus { background: #dadde1; }
.caption7 { position: relative; margin: 0 3px 0 auto; width: 104px; height: 19px; display: grid; grid-template-columns: 28px 28px 1fr; border: 1px solid #b9bcc0; border-top: 0; border-radius: 0 0 5px 5px; overflow: hidden; }
.caption7 b { display: grid; place-items: center; background: linear-gradient(#9a9da1, #6c7076 45%, #33373d 50%, #5a5e63); border-right: 1px solid #aaa; color: #fff; font-size: 14px; line-height: 14px; }
.caption7 .cls { background: linear-gradient(#d79385, #c4503c 45%, #a82410 50%, #cf5136); border: 0; }
.caption7 .min::after { content: ""; width: 12px; height: 4px; margin-top: 5px; background: #fff; border: 1px solid #555; }
.caption7 .max::after { content: ""; width: 9px; height: 9px; border: 2px solid #fff; }
.caption10 { margin: 8px 17px 0 auto; display: flex; gap: 34px; }
.caption10 svg { width: 12px; height: 12px; }

/* Toolbar */
.toolbar { height: 36px; flex: none; display: flex; align-items: center; padding: 0 8px 0 14px; background: #fff; }
.nav { width: 16px; height: 16px; color: #5f6368; margin-right: 16px; }
.fwd { color: #babcbe; transform: scaleX(-1); }
.omni { margin-left: -2px; width: 1639px; height: 28px; border-radius: 14px; background: #f1f3f4; display: flex; align-items: center; font-size: 13px; color: #5f6368; padding: 0 8px 1px 10px; }
.win10 .omni { width: 1576px; }
.warn { width: 15px; height: 13px; margin-right: 10px; }
.omni .bar { width: 1px; height: 16px; margin: 0 9px 0 8px; background: #80868b; }
.omni .host { color: #202124; }
.omni .end { margin-left: auto; }
.omni .blue { color: #1a73e8; --f: #1a73e8; margin-left: 14px; }
.exts { margin-left: auto; display: flex; align-items: center; gap: 16px; }
.uibox { width: 16px; height: 16px; background: #2467b0; color: #fff; font: 700 12px/15px "Open Sans", sans-serif; text-align: center; }
.avatar { width: 22px; height: 22px; margin: 0 -3px; border-radius: 50%; color: #fff; font-size: 11px; line-height: 22px; text-align: center; }
.teal { background: #0097a7; }
.slate { background: #455a64; }
.dots { width: 28px; height: 28px; margin: 0 0 0 -6px; border-radius: 50%; background: #dedfe0; display: flex; flex-direction: column; align-items: center; justify-content: center; gap: 2px; }
.exts .dots { margin-left: -6px; margin-right: 0; }
.dots i { width: 3px; height: 3px; border-radius: 50%; background: #5f6368; }

/* Bookmarks */
.bookmarks { height: 33px; flex: none; display: flex; gap: 16px; padding: 0 0 4px 13px; border-bottom: 1px solid #d3d5d8; overflow: hidden; color: #3c4043; white-space: nowrap; }
.bookmarks a { display: flex; gap: 8px; align-items: center; flex: none; }
.bookmarks svg { width: 16px; height: 16px; }
.htg, .uis, .vw, .fb { width: 16px; height: 16px; color: #fff; font: 700 7px/16px "Liberation Sans", sans-serif; text-align: center; }
.htg { background: #000; }
.uis { background: #fff; border: 2px solid #1284d0; color: #1284d0; font-size: 10px; line-height: 12px; }
.vw { background: #00a9ef; font-size: 16px; line-height: 13px; }
.fb { background: #4267b2; font-size: 16px; line-height: 18px; padding-left: 4px; }

/* Application frame */
.frame { flex: 1; min-height: 0; display: flex; flex-direction: column; border: 1px solid #369; border-bottom-width: 2px; padding: 2px 0 0 2px; }
.tabs { position: relative; height: 34px; flex: none; display: flex; gap: 3px; align-items: flex-end; padding-left: 3px; border: 1px solid #2d6496; border-width: 1px 0 1px 1px; background: linear-gradient(#8cb8dc, #7fb0d8); font-weight: 600; font-size: 12px; color: #2b6596; }
.tabs .wave { position: absolute; left: 0; top: 0; width: 100%; height: 32px; fill: #6fa6d3; }
.tabs a { position: relative; height: 28px; padding: 6px 13px 0; background: linear-gradient(#fff, #e6f1fa 48%, #d3e7f8 50%, #e9f4fd); border: 1px solid #cbe1f3; border-bottom: 0; margin: 0; padding: 6px 12px 0; }
.tabs .on { background: #fafafa; color: #e3711a; height: 29px; margin-bottom: -1px; border-color: #fff; }
.tabs .off { background: #9cc2e1b0; color: #5890bf; border-color: #93bcde; }
.arial { font-family: "Liberation Sans", sans-serif; font-weight: 700; font-size: 12px; }
.content { flex: 1; display: flex; min-height: 0; }
h1 { font-size: 18px; line-height: 26px; font-weight: 300; color: #444; padding: 9px 0 0 20px; height: 48px; }

/* Task list */
.listing { width: 1892px; padding-left: 5px; flex: none; }
.listing h1 { padding-left: 15px; }
.filters { width: 1886px; height: 38px; border: 1px solid #ccc; background: #f4f4f4; display: flex; align-items: center; padding: 0 0 2px 5px; overflow: hidden; }
.cb { width: 13px; height: 13px; border: 1px solid #6b6b6b; border-radius: 2px; background: #fff; flex: none; }
.flabel { margin: 0 2px 0 5px; }
.vr { width: 1px; height: 20px; background: #ccc; margin-right: 7px; }
.dt { flex: none; width: 200px; height: 26px; margin: 0 5px; border: 1px solid #ccc; border-radius: 4px; background: #f2f3f4; display: flex; align-items: center; color: #999; padding-left: 4px; gap: 6px; }
.dt svg:nth-of-type(1) { border-left: 0; margin-left: -1px; }
.dt .fit { border-right: 1px solid #ccc; line-height: 24px; margin-right: -1px; }
.filters .fit + .dt { margin-left: 4px; }
.tn { margin-left: -2px; }
.txt + .tn { margin-left: 3px; }
.txt { flex: none; width: 252px; height: 27px; margin-left: 3px; border: 1px solid #ccc; border-radius: 4px; background: #fff; }
.dl { flex: none; width: 90px; height: 26px; margin-left: 5px; padding-left: 5px; border: 1px solid #ccc; border-radius: 4px; background: #fff; display: flex; align-items: center; gap: 3px; font-size: 11.5px; }
.gridbox { width: 1887px; margin-top: 5px; border: 1px solid #ccc; border-radius: 3px; background: #f4f4f4; }
.ghead { display: grid; grid-template-columns: 28px 115px 97px 116px 123px 144px 123px 116px 96px 110px 141px 155px 141px 105px 198px 77px; height: 32px; border-bottom: 2px solid #ccc; }
.ghead div { border-right: 1px solid #ccc; padding: 6px 0 0 8px; display: flex; justify-content: space-between; min-width: 0; }
.ghead div:last-child { border: 0; }
.ghead .fit { padding-top: 4px; }
.ghead .ck { padding: 10px 0 0 7px; }
.ghead b { width: 36px; height: 30px; margin: -6px -1px 0 0; display: grid; place-items: center; padding-top: 6px; }
.ghead b svg { width: 13px; height: 13px; }
.ghead .sel { background: #428bca; }
.pager { height: 34px; display: flex; align-items: center; justify-content: space-between; padding: 0 17px 0 4px; color: #aaa; }
.pages { display: flex; width: 126px; height: 26px; border: 1px solid #ccc; border-radius: 4px; background: #fdfdfd; overflow: hidden; }
.pages i { flex: 1; border-right: 1px solid #ddd; display: grid; place-items: center; }
.pages i:last-child { border: 0; }
.pages svg { width: 8px; height: 8px; margin-top: 3px; }
.pages .cur { background: #428bca; color: #fff; }
.scroll { width: 17px; margin-left: 4px; background: #f1f1f1; display: flex; flex-direction: column; align-items: center; justify-content: space-between; padding-bottom: 8px; margin-bottom: 2px; }
.thumb { width: 13px; height: 783px; background: #c1c1c1; }
.down { border: 4px solid transparent; border-top: 5px solid #505050; border-bottom: 0; }

/* Task detail */
.detail { display: block; }
.detail h1 { height: 41px; }
.cmds { margin: 0 20px 0 20px; width: 1876px; height: 36px; border: 1px solid #ccc; border-width: 1px 0; display: flex; align-items: center; padding-left: 14px; color: #222; }
.cmds .save { width: 12px; height: 12px; margin-right: 26px; }
.cmds .i14 { color: #666; margin-top: 2px; margin-right: 26px; }
.tri { border: 4px solid transparent; border-top: 7px solid #222; border-bottom: 0; margin-left: 4px; }
.mo { margin-left: 24px; }
.form { display: flex; padding: 52px 0 0 26px; color: #666; }
.col { width: 594px; }
.row { display: flex; height: 22px; margin-bottom: 7px; }
.row label { width: 205px; flex: none; padding-top: 4px; }
.f { width: 312px; flex: none; height: 100%; border: 1px solid #c8c8c8; background: #f1f3f5; padding: 2px 2px; overflow: hidden; line-height: 17px; font-size: 12px; }
.f.w { background: #fff; color: #111; }
.row > .i16 { margin: 3px 0 0 4px; }
.clr { width: 11px; height: 11px; margin: 5px 0 0 7px; color: #555; }
.area { height: 57px; margin-bottom: 6px; }
.last { margin-bottom: 43px; }
.pick { height: 24px; margin-bottom: 20px; }
.pick .f { display: flex; justify-content: space-between; align-items: center; padding: 0 4px 0 6px; }
.pick svg { width: 10px; height: 8px; }
.btns { display: flex; gap: 3px; margin-left: -2px; width: 207px; overflow: hidden; }
.btn { width: 120px; height: 32px; flex: none; border: 1px solid #c8c8c8; display: grid; place-items: center; color: #111; padding-top: 2px; }

/* Page footer */
.foot { height: 53px; flex: none; display: grid; grid-template-columns: 433px 850px 561px 76px; color: #3b3188; font: 11px/16px "Open Sans", sans-serif; background: #fff; }
.foot p { padding-top: 18px; font-family: "DejaVu Sans", sans-serif; font-size: 10px; }
.conv { display: flex; padding: 1px 0 0 2px; color: #333; }
.cleaf { width: 17px; height: 47px; }
.conv div { margin-left: -4px; padding-top: 18px; line-height: 13px; }
.conv b, .conv small { display: block !important; }
.conv b { font: 700 15px/14px Lato, sans-serif; }
.conv small { font: 6px/8px Lato, sans-serif; color: #777; }
.sunt { padding-top: 8px; }
.sunt svg { width: 51px; height: 22px; margin-left: 9px; }
.sunt b { font: 700 18px/18px "Open Sans", sans-serif; color: #111; margin-top: -3px; }
.sunt em { color: #f7941d; }

/* Taskbars */
.task7, .task10 { height: 40px; flex: none; display: flex; color: #fff; }
.task7 { border-top: 1px solid #7b838c; background: linear-gradient(#2a3846, #0000 25%), linear-gradient(90deg, #070b10, #0c121b 800px, #11161e 1180px, #0a0d10 1220px, #1a1d26 1300px, #181c25 1500px, #07090c 1800px); gap: 4px; }
.orb { width: 38px; height: 39px; margin: 0 14px 0 8px; margin-right: 10px; }
.task7 .slot { position: relative; width: 58px; height: 38px; flex: none; display: grid; place-items: center; }
.task7 .slot svg { width: 32px; height: 32px; }
.task7 .on { border: 1px solid #93979b; border-radius: 3px; background: linear-gradient(155deg, #8d8f92, #4c4f53 38%, #24272b 52%, #2d3135); }
.task7 .lit { background: linear-gradient(155deg, #fff, #c5c7c9 38%, #8f9296 52%, #b6b8ba); }
.task7 .stack { width: 50px; margin-right: 8px; }
.task7 .stack::after { content: ""; position: absolute; left: 50px; top: -1px; width: 7px; height: 38px; border: solid #6f7478; border-width: 0 1px 0 0; box-shadow: inset -3px 0 #23272b, inset -4px 0 #6f7478; }
.task7 .one { width: 53px; margin-right: 5px; }
.task7 .one::after { width: 4px; left: 52px; box-shadow: none; }
.cmd { font: 9px "Liberation Mono", monospace; fill: #fff; }
.xl { font: 700 14px "Liberation Sans", sans-serif; fill: #fff; text-anchor: middle; }
.ui { width: 32px; height: 32px; font: 700 20px/30px "Open Sans", sans-serif; text-align: center; color: #fff; }
.b1 { background: #0067df; }
.b2 { background: #00489d; }
.red { background: #f04923; }
.ui.sm { width: 24px; height: 24px; font-size: 15px; line-height: 23px; }
.ibas { width: 32px; height: 32px; border-radius: 7px; border: 2px solid #4aa63f; background: linear-gradient(#e7f7dd, #bfe8a9 60%, #2c9a22); color: #164a17; font: 700 12px/25px "Open Sans", sans-serif; letter-spacing: -.8px; text-align: center; }
.ibas em { color: #d43a1c; }
.tray { margin-left: auto; display: flex; align-items: center; height: 100%; }
.task7 .tray { gap: 5px; }
.tray .up { width: 8px; height: 5px; margin-right: 12px; }
.time { display: flex; flex-direction: column; align-items: center; width: 54px; font-size: 11.500px; }
.time .fit { line-height: 17px; }
.task7 .time { margin-left: 8px; }
.task7 .peek { width: 14px; height: 38px; margin-left: 6px; border: 1px solid #60656a; background: linear-gradient(150deg, #8a8d90, #2c3034 45%, #16191c); }
.task10 { background: #000; gap: 1px; }
.task10 .slot { width: 48px; height: 40px; display: grid; place-items: center; flex: none; margin: 0; }
.task10 .slot:nth-child(-n+3) { margin-right: -1px; }
.task10 .gap { margin-left: 4px; }
.task10 svg:not([class]) { width: 24px; height: 24px; }
.run { background: linear-gradient(#76b9ed, #76b9ed) center bottom / 40px 2px no-repeat; }
.act { background: linear-gradient(#76b9ed, #76b9ed) center bottom / 48px 2px no-repeat, #333; }
.task10 .tray { gap: 7px; }
.task10 .time { margin-left: 1px; }
.note { width: 17px; height: 16px; margin-left: 9px; }
.task10 .peek { width: 5px; height: 40px; margin-left: 12px; border-left: 1px solid #555; }

/* Floating pieces */
.bubble { position: absolute; top: 67px; background: #fff; color: #202124; padding: 18px 16px; border-radius: 2px; box-shadow: 0 0 2px #777, 0 3px 5px #0005; }
.big { left: 1375px; width: 544px; height: 172px; }
.small { left: 1599px; width: 320px; height: 130px; }
.bubble .x { position: absolute; right: 10px; top: 10px; width: 11px; height: 11px; color: #5f6368; }
.bubble h2 { font-size: 14px; line-height: 20px; }
.bubble p { margin-top: 10px; font-size: 12px; }
.opt { display: flex; align-items: center; margin: 21px 0 0 2px; gap: 20px; color: #5f6368; }
.opt i { width: 12px; height: 12px; border: 2px solid #5f6368; margin-top: 3px; }
.opt a { color: #1a5fdc; }
.acts { display: flex; justify-content: flex-end; gap: 8px; margin-top: 18px; }
.big .acts { margin-top: 21px; }
button { height: 32px; border-radius: 4px; border: 1px solid #dadce0; background: #fff; color: #1a62dc; font: 600 11.5px/28px "Open Sans", sans-serif; padding: 0; width: 140px; }
.bubble .pri { width: 74px; background: #1a73e8; color: #fff; border-color: #1a73e8; }
button.sec { font-weight: 400; }
.rdp { position: absolute; left: 1182px; top: 0; width: 576px; height: 27px; display: flex; align-items: center; padding: 0 36px 3px 30px; color: #fff; }
.rdp .shape { position: absolute; inset: 0; width: 576px; height: 27px; }
.rdp > :not(.shape) { position: relative; }
.pin { width: 22px; height: 20px; border: 1px solid #20406b; border-radius: 3px; background: #3566a1; display: grid; place-items: center; }
.pin svg { width: 13px; height: 10px; }
.sig { width: 12px; height: 12px; margin-left: 6px; }
.rdp .addr { margin: 0 auto 0 177px; font-size: 11.5px; }
.rdp .c { width: 10px; height: 10px; margin-left: 14px; }
.activate { position: absolute; left: 1600px; top: 943px; display: flex; flex-direction: column; color: #9a9a9ab0; }
.a1 { font-size: 18px; line-height: 28px; }
.a2 { font-size: 13px; line-height: 20px; }
```
